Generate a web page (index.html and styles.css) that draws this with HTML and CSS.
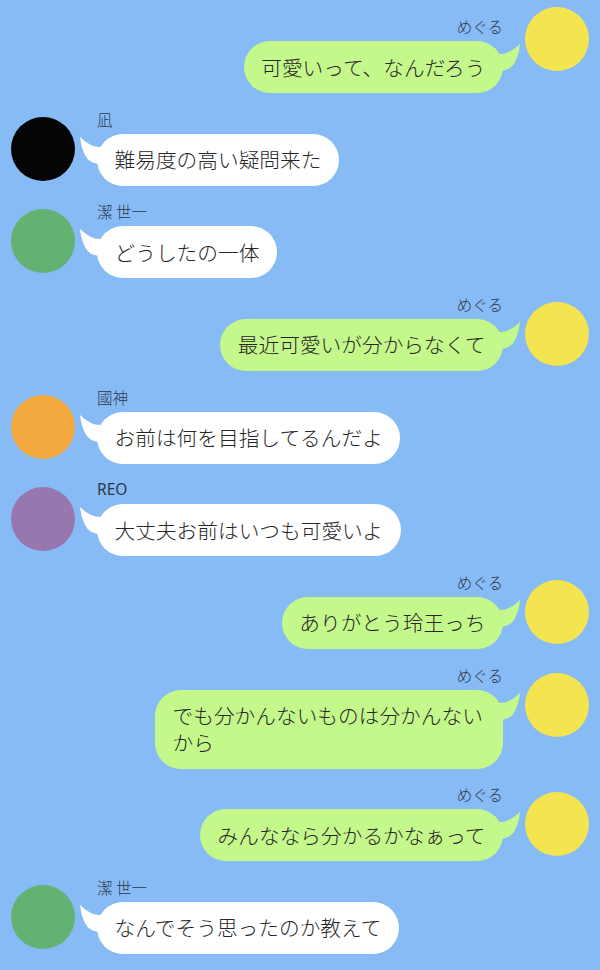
FILE: index.html
```html
<!DOCTYPE html>
<html lang="ja">
<head>
<meta charset="utf-8">
<title>chat</title>
<link rel="stylesheet" href="styles.css">
</head>
<body>
<div class="chat">
  <div class="row right">
    <div class="avatar yellow first"></div>
    <div class="body">
      <div class="name">めぐる</div>
      <div class="bubble green">可愛いって、なんだろう<svg class="tail" viewBox="0 0 24 32"><path d="M1 3 Q12 14 23 13 L23 30 Q10 30 6 21 Q2 13 1 3 Z"/></svg></div>
    </div>
  </div>
  <div class="row left">
    <div class="avatar black"></div>
    <div class="body">
      <div class="name">凪</div>
      <div class="bubble white">難易度の高い疑問来た<svg class="tail" viewBox="0 0 24 32"><path d="M1 3 Q12 14 23 13 L23 30 Q10 30 6 21 Q2 13 1 3 Z"/></svg></div>
    </div>
  </div>
  <div class="row left">
    <div class="avatar green-av"></div>
    <div class="body">
      <div class="name">潔 世一</div>
      <div class="bubble white">どうしたの一体<svg class="tail" viewBox="0 0 24 32"><path d="M1 3 Q12 14 23 13 L23 30 Q10 30 6 21 Q2 13 1 3 Z"/></svg></div>
    </div>
  </div>
  <div class="row right">
    <div class="avatar yellow"></div>
    <div class="body">
      <div class="name">めぐる</div>
      <div class="bubble green">最近可愛いが分からなくて<svg class="tail" viewBox="0 0 24 32"><path d="M1 3 Q12 14 23 13 L23 30 Q10 30 6 21 Q2 13 1 3 Z"/></svg></div>
    </div>
  </div>
  <div class="row left">
    <div class="avatar orange"></div>
    <div class="body">
      <div class="name">國神</div>
      <div class="bubble white">お前は何を目指してるんだよ<svg class="tail" viewBox="0 0 24 32"><path d="M1 3 Q12 14 23 13 L23 30 Q10 30 6 21 Q2 13 1 3 Z"/></svg></div>
    </div>
  </div>
  <div class="row left">
    <div class="avatar purple"></div>
    <div class="body">
      <div class="name latin">REO</div>
      <div class="bubble white">大丈夫お前はいつも可愛いよ<svg class="tail" viewBox="0 0 24 32"><path d="M1 3 Q12 14 23 13 L23 30 Q10 30 6 21 Q2 13 1 3 Z"/></svg></div>
    </div>
  </div>
  <div class="row right">
    <div class="avatar yellow"></div>
    <div class="body">
      <div class="name">めぐる</div>
      <div class="bubble green">ありがとう玲王っち<svg class="tail" viewBox="0 0 24 32"><path d="M1 3 Q12 14 23 13 L23 30 Q10 30 6 21 Q2 13 1 3 Z"/></svg></div>
    </div>
  </div>
  <div class="row right">
    <div class="avatar yellow"></div>
    <div class="body">
      <div class="name">めぐる</div>
      <div class="bubble green">でも分かんないものは分かんないから<svg class="tail" viewBox="0 0 24 32"><path d="M1 3 Q12 14 23 13 L23 30 Q10 30 6 21 Q2 13 1 3 Z"/></svg></div>
    </div>
  </div>
  <div class="row right">
    <div class="avatar yellow"></div>
    <div class="body">
      <div class="name">めぐる</div>
      <div class="bubble green">みんななら分かるかなぁって<svg class="tail" viewBox="0 0 24 32"><path d="M1 3 Q12 14 23 13 L23 30 Q10 30 6 21 Q2 13 1 3 Z"/></svg></div>
    </div>
  </div>
  <div class="row left">
    <div class="avatar green-av"></div>
    <div class="body">
      <div class="name">潔 世一</div>
      <div class="bubble white">なんでそう思ったのか教えて<svg class="tail" viewBox="0 0 24 32"><path d="M1 3 Q12 14 23 13 L23 30 Q10 30 6 21 Q2 13 1 3 Z"/></svg></div>
    </div>
  </div>
</div>
</body>
</html>
```

FILE: styles.css
```css
html, body {
  margin: 0;
  padding: 0;
  background: #87bbf6;
}
body {
  width: 600px;
  height: 970px;
  overflow: hidden;
  font-family: "Noto Sans CJK JP", "Noto Sans", sans-serif;
  text-spacing-trim: space-all;
}
.chat {
  padding-top: 17px;
  display: flex;
  flex-direction: column;
  gap: 16.67px;
}
.row {
  display: flex;
  align-items: flex-start;
  gap: 22px;
}
.row.left {
  padding-left: 11px;
}
.row.right {
  flex-direction: row-reverse;
  padding-right: 11px;
}
.avatar {
  width: 64px;
  height: 64px;
  border-radius: 50%;
  flex: none;
  margin-top: 7px;
}
.avatar.first { margin-top: -10px; }
.yellow { background: #f4e550; }
.black { background: #040404; }
.green-av { background: #63b271; }
.orange { background: #f2a83d; }
.purple { background: #9677ae; }
.body {
  display: flex;
  flex-direction: column;
}
.left .body { align-items: flex-start; }
.right .body { align-items: flex-end; }
.name {
  font-size: 15.5px;
  line-height: 18px;
  font-weight: 300;
  color: #2d3849;
  margin-bottom: 6px;
}
.name.latin {
  font-family: "Noto Sans", "Noto Sans CJK JP", sans-serif;
  font-weight: 400;
}
.bubble {
  position: relative;
  box-sizing: border-box;
  max-width: 348px;
  padding: 12.5px 17.5px;
  font-size: 20.7px;
  line-height: 27px;
  font-weight: 300;
  color: #262626;
  border-radius: 26px;
  font-feature-settings: "fwid" 1;
}
.bubble.white { background: #ffffff; }
.bubble.green { background: #c4f88b; }
.tail {
  position: absolute;
  top: 0;
  width: 24px;
  height: 32px;
}
.white .tail { fill: #ffffff; left: -18px; }
.green .tail { fill: #c4f88b; right: -18px; transform: scaleX(-1); }
```
